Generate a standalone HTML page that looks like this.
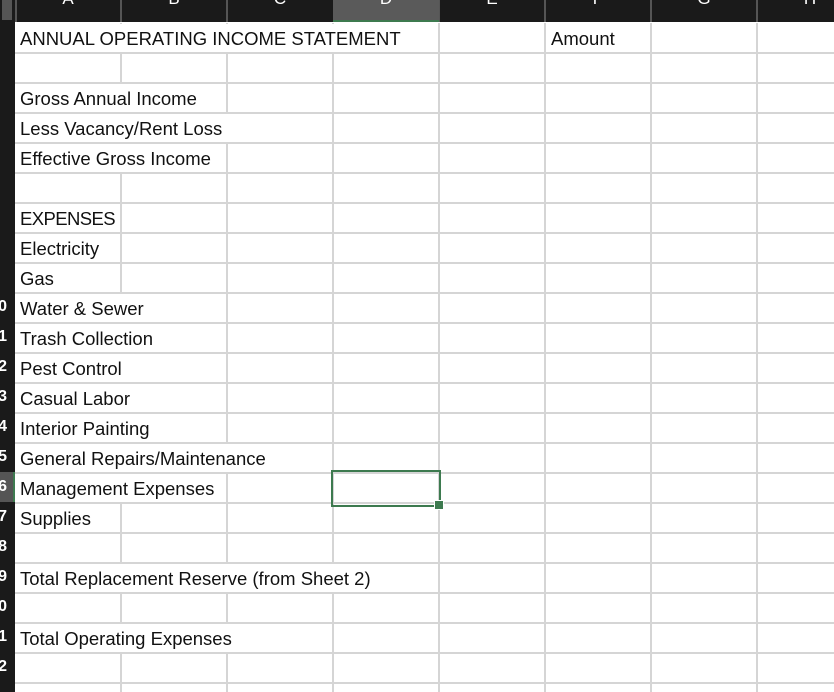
<!DOCTYPE html>
<html><head><style>
html,body{margin:0;width:834px;height:692px;overflow:hidden;}
body{background:#fff;position:relative;font-family:"Liberation Sans",Arial,sans-serif;}
.v{position:absolute;top:23px;width:2px;height:669px;background:#d5d5d5}
.h{position:absolute;left:15px;height:2px;width:819px;background:#d5d5d5}
.t{position:absolute;height:28px;line-height:30px;background:#fff;font-size:18.5px;color:#111;padding-left:5px;white-space:nowrap;letter-spacing:0px;overflow:visible}
.hd{position:absolute;top:0;left:0;width:834px;height:22px;background:#1a1a1a;overflow:hidden}
.hs{position:absolute;top:0;width:2px;height:22px;background:#555}
.hl{position:absolute;top:-11px;width:106px;text-align:center;color:#fff;font-size:17px}
.rn{position:absolute;left:0;width:15px;height:670px;background:#1a1a1a;overflow:hidden}
.rd{position:absolute;right:8px;color:#fff;font-size:16px;font-weight:bold}
</style></head><body>
<div class="v" style="left:120px"></div><div class="v" style="left:226px"></div><div class="v" style="left:332px"></div><div class="v" style="left:438px"></div><div class="v" style="left:544px"></div><div class="v" style="left:650px"></div><div class="v" style="left:756px"></div>
<div class="h" style="top:52px"></div><div class="h" style="top:82px"></div><div class="h" style="top:112px"></div><div class="h" style="top:142px"></div><div class="h" style="top:172px"></div><div class="h" style="top:202px"></div><div class="h" style="top:232px"></div><div class="h" style="top:262px"></div><div class="h" style="top:292px"></div><div class="h" style="top:322px"></div><div class="h" style="top:352px"></div><div class="h" style="top:382px"></div><div class="h" style="top:412px"></div><div class="h" style="top:442px"></div><div class="h" style="top:472px"></div><div class="h" style="top:502px"></div><div class="h" style="top:532px"></div><div class="h" style="top:562px"></div><div class="h" style="top:592px"></div><div class="h" style="top:622px"></div><div class="h" style="top:652px"></div><div class="h" style="top:682px"></div>

<div class="t" style="left:15px;top:24px;width:418px">ANNUAL OPERATING INCOME STATEMENT</div>
<div class="t" style="left:546px;top:24px;width:99px">Amount</div>
<div class="t" style="left:15px;top:84px;width:206px">Gross Annual Income</div>
<div class="t" style="left:15px;top:114px;width:312px">Less Vacancy/Rent Loss</div>
<div class="t" style="left:15px;top:144px;width:206px">Effective Gross Income</div>
<div class="t" style="left:15px;top:204px;width:100px;letter-spacing:-0.6px">EXPENSES</div>
<div class="t" style="left:15px;top:234px;width:100px">Electricity</div>
<div class="t" style="left:15px;top:264px;width:100px">Gas</div>
<div class="t" style="left:15px;top:294px;width:206px">Water &amp; Sewer</div>
<div class="t" style="left:15px;top:324px;width:206px">Trash Collection</div>
<div class="t" style="left:15px;top:354px;width:206px">Pest Control</div>
<div class="t" style="left:15px;top:384px;width:206px">Casual Labor</div>
<div class="t" style="left:15px;top:414px;width:206px">Interior Painting</div>
<div class="t" style="left:15px;top:444px;width:312px">General Repairs/Maintenance</div>
<div class="t" style="left:15px;top:474px;width:206px">Management Expenses</div>
<div class="t" style="left:15px;top:504px;width:100px">Supplies</div>
<div class="t" style="left:15px;top:564px;width:418px">Total Replacement Reserve (from Sheet 2)</div>
<div class="t" style="left:15px;top:624px;width:312px">Total Operating Expenses</div>

<div style="position:absolute;left:331px;top:470px;width:106px;height:33px;border:2px solid #3d7a4f"></div>
<div style="position:absolute;left:434px;top:500px;width:8px;height:8px;background:#3d7a4f;border:1px solid #fff"></div>

<div class="hd">
<div class="hs" style="left:15px"></div><div class="hs" style="left:120px"></div><div class="hs" style="left:226px"></div><div class="hs" style="left:438px"></div><div class="hs" style="left:544px"></div><div class="hs" style="left:650px"></div><div class="hs" style="left:756px"></div>
<div style="position:absolute;left:0;top:0;width:15px;height:22px;background:#1a1a1a"></div>
<div style="position:absolute;left:2px;top:0;width:10px;height:20px;background:#555"></div>
<div style="position:absolute;left:333px;top:0;width:106px;height:20px;background:#5a5a5a"></div>
<div style="position:absolute;left:333px;top:20px;width:106px;height:2px;background:#3d7a4f"></div>
<div class="hl" style="left:15px">A</div><div class="hl" style="left:121px">B</div><div class="hl" style="left:227px">C</div><div class="hl" style="left:333px">D</div><div class="hl" style="left:439px">E</div><div class="hl" style="left:545px">F</div><div class="hl" style="left:651px">G</div><div class="hl" style="left:757px">H</div>
</div>
<div class="rn" style="top:22px">
<div style="position:absolute;left:0;top:450px;width:13px;height:30px;background:#555"></div>
<div style="position:absolute;left:13px;top:450px;width:2px;height:30px;background:#3d7a4f"></div>
<div class="rd" style="top:276px">0</div><div class="rd" style="top:306px">1</div><div class="rd" style="top:336px">2</div><div class="rd" style="top:366px">3</div><div class="rd" style="top:396px">4</div><div class="rd" style="top:426px">5</div><div class="rd" style="top:456px">6</div><div class="rd" style="top:486px">7</div><div class="rd" style="top:516px">8</div><div class="rd" style="top:546px">9</div><div class="rd" style="top:576px">0</div><div class="rd" style="top:606px">1</div><div class="rd" style="top:636px">2</div>
</div>
</body></html>
